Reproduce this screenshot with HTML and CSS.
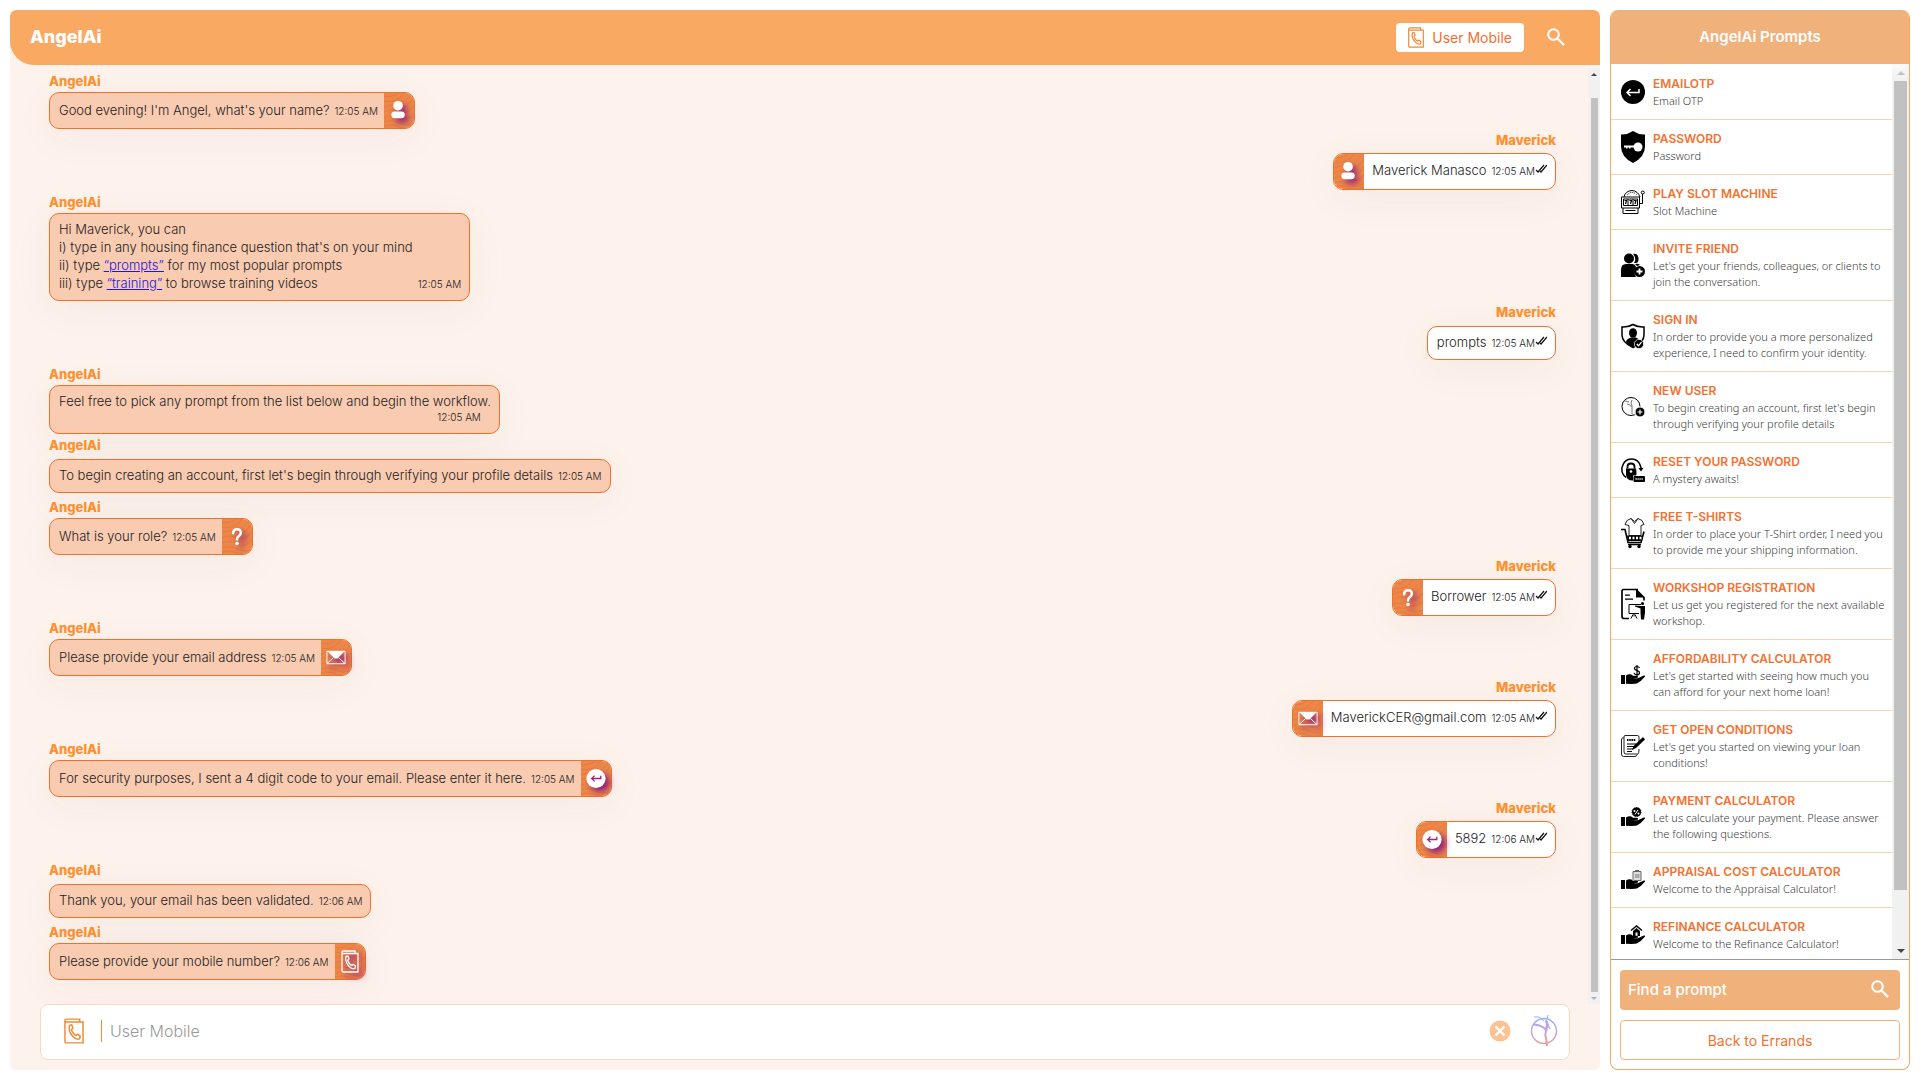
FILE: index.html
```html
<!DOCTYPE html>
<html lang="en">
<head>
<meta charset="utf-8">
<meta name="viewport" content="width=device-width, initial-scale=1">
<title>AngelAi</title>
<link rel="stylesheet" href="styles.css">
</head>
<body>
<svg class="defs" aria-hidden="true">
  <defs>
    <linearGradient id="dance" gradientUnits="userSpaceOnUse" x1="0" y1="2" x2="0" y2="32">
      <stop offset="0" stop-color="#6d9bea"/><stop offset=".45" stop-color="#b78bec"/><stop offset="1" stop-color="#e58a6c"/>
    </linearGradient>
    <symbol id="grain" viewBox="0 0 30 35">
      <g fill="none" stroke="#df712f" stroke-width="1" opacity=".5">
        <path d="M0 3q8 2 14-3M0 8q12 3 20-8M0 14q9-4 16-1t14-9M0 19q8-4 15 0t15-6M0 24q9-3 16 1t14-4M0 29q8-3 15 1t15 0M0 33q9-2 15 1t15-1M22 7q3-4 8-6"/>
      </g>
    </symbol>
    <symbol id="person" viewBox="0 0 20 24"><circle cx="9" cy="7" r="5"/><rect x="2" y="13" width="14" height="7" rx="3.500"/></symbol>
    <symbol id="question" viewBox="0 0 20 24"><path d="M6 8.500Q6 4.500 10 4.500T14 8.300Q14 10 11.700 11.800Q10 13 10 15" fill="none" stroke="currentColor" stroke-width="2.600" stroke-linecap="round"/><circle cx="10" cy="19.300" r="1.900"/></symbol>
    <symbol id="mail" viewBox="0 0 20 24"><path d="M.5 5.500h19v13H.5z" fill="none" stroke="currentColor"/><path d="M1 5.500h18L11.500 13h-3z"/><path d="M.5 18.500l7-6.500M19.500 18.500l-7-6.500" stroke="currentColor"/></symbol>
    <symbol id="enter" viewBox="0 0 20 24"><circle cx="10" cy="12" r="10"/><path d="M15 9v3H6M8.500 9L5.500 12l3 3" fill="none" stroke="#a02572" stroke-width="1.400"/></symbol>
    <symbol id="phone" viewBox="0 0 18 23"><g fill="none" stroke="currentColor" stroke-width="1.300"><path d="M1 3.500h16v18.500H2.500Q1 22 1 20.500V2.500Q1 1 2.500 1H14v2.500"/><path d="M5 6.500l2-.5 1 3-1.300 1.200q1.200 4 4.200 5.300l1.300-1.200 2.300 1.800-.6 2.400q-3 1.200-6.200-2.500-4-4.500-2.700-9.500z" stroke-linejoin="round"/></g></symbol>
    <symbol id="search" viewBox="0 0 18 18"><circle cx="6.500" cy="6.500" r="5.300" fill="none" stroke="currentColor" stroke-width="2"/><path d="M10.500 10.500L17 17" stroke="currentColor" stroke-width="2.400"/></symbol>
    <symbol id="ticks" viewBox="0 0 12 10"><path d="M1 6l2 2 6-7M5 7l1 1 6-7" fill="none" stroke="currentColor" stroke-width="1.200"/></symbol>
    <symbol id="close" viewBox="0 0 22 22"><circle cx="11" cy="11" r="10.500" fill="#fdc291"/><path d="M6.500 6.500l9 9M15.500 6.500l-9 9" stroke="#fff" stroke-width="2.400"/></symbol>
    <symbol id="dancer" viewBox="0 0 28 34"><g fill="none" stroke="url(#dance)" opacity=".8"><circle cx="14" cy="17" r="12.500" stroke-width="1.500"/><path d="M4 3l5 0 5 4M18 1l-1 4M16 10l4 5-2-5" stroke-width="1"/><path d="M15.500 6.500q3 3 1 7l-.5 4" stroke-width="2.400"/><path d="M16 16Q12 11 3.500 10.500M16 17q-1.500 4 .2 8l.8 7" stroke-width="2"/></g></symbol>
    <symbol id="hand" viewBox="0 0 24 12"><path d="M0 2h4v9H0z"/><path d="M5 2.500q4-2.500 7 .2h4q1.500.5.800 2l-5 .6h5l6-2.800q1.800-.2 1 1.200-4 5-8 6.800-2 .7-10.800.3z"/></symbol>
    <symbol id="p-enter" viewBox="0 0 24 24"><circle cx="12" cy="12" r="12"/><path d="M18 9v3.500H7M9.500 9L6 12.500l3.500 3.500" fill="none" stroke="#fff" stroke-width="1.500"/></symbol>
    <symbol id="p-password" viewBox="0 0 24 32"><path d="M12 0q6 4 12 3.500v12Q24 26 12 32 0 26 0 15.500v-12Q6 4 12 0z"/><circle cx="17" cy="16" r="4.500" fill="#fff"/><path d="M14 14.500H3v2h2v1h1.500v-1H8v1h1.500v-1H14z" fill="#fff"/></symbol>
    <symbol id="p-slot" viewBox="0 0 24 24"><g fill="none" stroke="#000"><path d="M3 7q1-6 8-6.500Q17 1 19 7"/><path d="M6 5q2-2.500 5-2.500t5 2.500" stroke-dasharray="1 1"/><path d="M.5 7h18v11H.5zM2.500 9h14v6.500h-14zM7 9v6.500M12 9v6.500M2 18v5.500h15V18M4.500 20.500h10M18.500 13.500h3V4"/><path d="M3.500 10.500h2l-1 3.500M8.500 10.500h2l-1 3.500M13 10.500h2l-1 3.500" stroke-width="1.200"/><circle cx="21.800" cy="2.500" r="1.500"/></g></symbol>
    <symbol id="p-invite" viewBox="0 0 24 24"><circle cx="8" cy="5.500" r="5"/><path d="M12 .8q5-1 5.500 4.500T13 10q3-4-1-9.200zM0 24V17q0-6 5-6h6q3 0 4 3-3 5 0 10zM14 11q3-1 5 1l-3 1z"/><circle cx="18.500" cy="18.500" r="5.500"/><path d="M18.500 15.500v6M15.500 18.500h6" stroke="#fff" stroke-width="1.800"/></symbol>
    <symbol id="p-signin" viewBox="0 0 24 25"><path d="M12 1q5 3 11 2.500v8Q23 19 12 24 1 19 1 11.500v-8Q7 4 12 1z" fill="none" stroke="#000" stroke-width="1.500"/><ellipse cx="12" cy="9.500" rx="4" ry="4.800"/><path d="M5 18q1-3 5-4h5q3 1 4 4l-7 6q-5-2-7-6z"/><circle cx="18" cy="20.500" r="4.600" stroke="#fff" stroke-width=".7"/><path d="M15.800 20.500l1.700 1.800 3-3.600" fill="none" stroke="#fff" stroke-width="1.300"/></symbol>
    <symbol id="p-new" viewBox="0 0 24 20"><circle cx="10" cy="9.500" r="9" fill="none" stroke="#000"/><path d="M4 4l4 1M6 7q3 0 4.500 3M11 3q-2 3 0 6v8" fill="none" stroke="#777"/><circle cx="19" cy="15" r="5" stroke="#fff"/><path d="M19 12.500v5M16.500 15h5" stroke="#fff" stroke-width="1.200"/></symbol>
    <symbol id="p-reset" viewBox="0 0 24 25"><path d="M5 20Q0 16 1 10 3 1.500 10.500 1.500T20 10v2" fill="none" stroke="#000" stroke-width="1.500"/><path d="M17.500 10.500h5L20 14zM5 11h10q1 6 0 7h-3v5Q5 23 5 17z"/><path d="M6.500 11V9q0-3 3.500-3t3.500 3v2" fill="none" stroke="#000" stroke-width="1.800"/><circle cx="10" cy="14" r="1.300" fill="#fff"/><rect x="12.500" y="18.500" width="11.500" height="6" rx="1"/><path d="M14.500 21.500h8" stroke="#fff" stroke-width="1.400" stroke-dasharray="1.200 .8"/></symbol>
    <symbol id="p-shirt" viewBox="0 0 24 31"><path d="M10 1L6 3 4 7l4 1v10h12V8l3-1-2-4-4-2-3.500 3zM10 1l3.500 5 3.500-5" fill="none" stroke="#222"/><path d="M0 12h4l3 13h13l3-11" fill="none" stroke="#000" stroke-width="1.600"/><path d="M6 18h16l-1 5.500H7z"/><path d="M8 20.500h13" stroke="#fff" stroke-width="2.500" stroke-dasharray="2 1.500"/><path d="M7 27h13" stroke="#000" stroke-width="1.500"/><circle cx="9" cy="29" r="1.700"/><circle cx="18" cy="29" r="1.700"/></symbol>
    <symbol id="p-workshop" viewBox="0 0 24 31"><path d="M17 1H2.500Q1 1 1 2.500v25Q1 30 3 30h5M15 1l8 8v3" fill="none" stroke="#000" stroke-width="1.700"/><path d="M15 1v8h8zM4 6h5v1.300H4zM4 10h8v1.300H4z"/><path d="M20 16H8v9h10M13 25v3M12 26l-2 4M14 26l2 4" fill="none" stroke="#000"/><circle cx="21.500" cy="15" r="1.600"/><path d="M14 17l6 .5h4V24l-1 7h-3l-.5-7v-4l-5.500-2z"/></symbol>
    <symbol id="p-afford" viewBox="0 0 24 20"><use href="#hand" y="8" width="24" height="12"/><path d="M18.500 3Q18 1.500 16 1.500q-2.500 0-2.500 2 0 1.500 2.500 2t2.500 2.300q0 2-2.500 2T13 7.800M16 0v11" fill="none" stroke="#000" stroke-width="1.200"/></symbol>
    <symbol id="p-loan" viewBox="0 0 24 22"><path d="M18 7V2q0-1.500-1.500-1.500H4Q3 .5 3 2v15q0 2 2 2h12q1-.5 1-5M3 3H1.500Q.5 3 .5 5v14q0 2.500 2 2.500H14q1.500 0 2-2" fill="none" stroke="#222"/><path d="M6 5h9" stroke="#000" stroke-width="2" stroke-dasharray="1.500 .7"/><path d="M6 9h9M6 11.500h7M6 14h6M6 16.500h5" stroke="#000"/><path d="M22 2l2 2.500L15 13l-4 2 1.500-4z"/></symbol>
    <symbol id="p-pay" viewBox="0 0 24 20"><use href="#hand" y="8" width="24" height="12"/><circle cx="15.500" cy="5" r="4.500" stroke="#000" stroke-dasharray="1.500 1"/><path d="M17 3l-3 4.500" stroke="#fff"/><circle cx="13.500" cy="4" r="1" fill="#fff"/><circle cx="17.500" cy="6.500" r="1" fill="#fff"/></symbol>
    <symbol id="p-appraisal" viewBox="0 0 24 20"><use href="#hand" y="8" width="24" height="12"/><path d="M12 1.500h8v9h-7l-1-1z" fill="#ddd" stroke="#666"/><path d="M14 0h4v2h-4z" fill="#666"/><path d="M14 5h4.500M14 7h4.500" stroke="#777"/></symbol>
    <symbol id="p-refi" viewBox="0 0 24 20"><use href="#hand" y="8" width="24" height="12"/><path d="M10 5.500L15.500 1 21 5.500" fill="none" stroke="#000" stroke-width="1.500"/><path d="M12 6l3.500-3L19 6v5h-2.500V7.500h-2V11H12z"/></symbol>
  </defs>
</svg>

<main class="chat">
  <header class="chat-head">
    <h1 class="brand">AngelAi</h1>
    <button class="topic" type="button"><svg class="topic-icon"><use href="#phone"/></svg>User Mobile</button>
    <button class="icon-btn" type="button" aria-label="Search conversation"><svg class="ico-search"><use href="#search"/></svg></button>
  </header>

  <div class="chat-body">
    <div class="log">
      <article class="msg"><h2 class="who">AngelAi</h2>
        <div class="bubble"><div class="said"><p class="text">Good evening! I'm Angel, what's your name?</p><time class="time">12:05 AM</time></div><span class="tile"><svg class="grain"><use href="#grain"/></svg><svg class="glyph"><use href="#person"/></svg></span></div></article>
      <article class="msg mine"><h2 class="who">Maverick</h2>
        <div class="bubble"><span class="tile"><svg class="grain"><use href="#grain"/></svg><svg class="glyph"><use href="#person"/></svg></span><div class="said"><p class="text">Maverick Manasco</p><time class="time">12:05 AM</time><svg class="ticks"><use href="#ticks"/></svg></div></div></article>
      <article class="msg"><h2 class="who">AngelAi</h2>
        <div class="bubble"><div class="said"><p class="text">Hi Maverick, you can<br>i) type in any housing finance question that's on your mind<br>ii) type <a class="link" href="#">“prompts”</a> for my most popular prompts<br>iii) type <a class="link" href="#">“training”</a> to browse training videos</p><time class="time">12:05 AM</time></div></div></article>
      <article class="msg mine plain"><h2 class="who">Maverick</h2>
        <div class="bubble"><div class="said"><p class="text">prompts</p><time class="time">12:05 AM</time><svg class="ticks"><use href="#ticks"/></svg></div></div></article>
      <article class="msg"><h2 class="who">AngelAi</h2>
        <div class="bubble"><div class="said stacked"><p class="text">Feel free to pick any prompt from the list below and begin the workflow.</p><time class="time">12:05 AM</time></div></div></article>
      <article class="msg plain"><h2 class="who">AngelAi</h2>
        <div class="bubble"><div class="said"><p class="text">To begin creating an account, first let's begin through verifying your profile details</p><time class="time">12:05 AM</time></div></div></article>
      <article class="msg"><h2 class="who">AngelAi</h2>
        <div class="bubble"><div class="said"><p class="text">What is your role?</p><time class="time">12:05 AM</time></div><span class="tile"><svg class="grain"><use href="#grain"/></svg><svg class="glyph"><use href="#question"/></svg></span></div></article>
      <article class="msg mine"><h2 class="who">Maverick</h2>
        <div class="bubble"><span class="tile"><svg class="grain"><use href="#grain"/></svg><svg class="glyph"><use href="#question"/></svg></span><div class="said"><p class="text">Borrower</p><time class="time">12:05 AM</time><svg class="ticks"><use href="#ticks"/></svg></div></div></article>
      <article class="msg"><h2 class="who">AngelAi</h2>
        <div class="bubble"><div class="said"><p class="text">Please provide your email address</p><time class="time">12:05 AM</time></div><span class="tile"><svg class="grain"><use href="#grain"/></svg><svg class="glyph"><use href="#mail"/></svg></span></div></article>
      <article class="msg mine"><h2 class="who">Maverick</h2>
        <div class="bubble"><span class="tile"><svg class="grain"><use href="#grain"/></svg><svg class="glyph"><use href="#mail"/></svg></span><div class="said"><p class="text">MaverickCER@gmail.com</p><time class="time">12:05 AM</time><svg class="ticks"><use href="#ticks"/></svg></div></div></article>
      <article class="msg"><h2 class="who">AngelAi</h2>
        <div class="bubble"><div class="said"><p class="text">For security purposes, I sent a 4 digit code to your email. Please enter it here.</p><time class="time">12:05 AM</time></div><span class="tile"><svg class="grain"><use href="#grain"/></svg><svg class="glyph"><use href="#enter"/></svg></span></div></article>
      <article class="msg mine"><h2 class="who">Maverick</h2>
        <div class="bubble"><span class="tile"><svg class="grain"><use href="#grain"/></svg><svg class="glyph"><use href="#enter"/></svg></span><div class="said"><p class="text">5892</p><time class="time">12:06 AM</time><svg class="ticks"><use href="#ticks"/></svg></div></div></article>
      <article class="msg plain"><h2 class="who">AngelAi</h2>
        <div class="bubble"><div class="said"><p class="text">Thank you, your email has been validated.</p><time class="time">12:06 AM</time></div></div></article>
      <article class="msg"><h2 class="who">AngelAi</h2>
        <div class="bubble"><div class="said"><p class="text">Please provide your mobile number?</p><time class="time">12:06 AM</time></div><span class="tile"><svg class="grain"><use href="#grain"/></svg><svg class="glyph"><use href="#phone"/></svg></span></div></article>
    </div>
    <div class="bar bar-chat" aria-hidden="true"><span class="arrow up"></span><span class="thumb"></span><span class="arrow down faint"></span></div>
  </div>

  <form class="composer">
    <svg class="composer-icon"><use href="#phone"/></svg>
    <input class="composer-input" type="text" aria-label="User Mobile" placeholder="User Mobile">
    <button class="icon-btn" type="button" aria-label="Clear"><svg class="ico-close"><use href="#close"/></svg></button>
    <button class="icon-btn" type="submit" aria-label="Send"><svg class="ico-dancer"><use href="#dancer"/></svg></button>
  </form>
</main>

<aside class="side">
  <h2 class="side-head">AngelAi Prompts</h2>
  <div class="side-body">
    <ul class="prompts">
      <li class="prompt"><svg class="p-icon"><use href="#p-enter"/></svg><div><h3 class="p-title">EMAILOTP</h3><p class="p-text">Email OTP</p></div></li>
      <li class="prompt"><svg class="p-icon"><use href="#p-password"/></svg><div><h3 class="p-title">PASSWORD</h3><p class="p-text">Password</p></div></li>
      <li class="prompt"><svg class="p-icon"><use href="#p-slot"/></svg><div><h3 class="p-title">PLAY SLOT MACHINE</h3><p class="p-text">Slot Machine</p></div></li>
      <li class="prompt"><svg class="p-icon"><use href="#p-invite"/></svg><div><h3 class="p-title">INVITE FRIEND</h3><p class="p-text">Let's get your friends, colleagues, or clients to join the conversation.</p></div></li>
      <li class="prompt"><svg class="p-icon"><use href="#p-signin"/></svg><div><h3 class="p-title">SIGN IN</h3><p class="p-text">In order to provide you a more personalized experience, I need to confirm your identity.</p></div></li>
      <li class="prompt"><svg class="p-icon"><use href="#p-new"/></svg><div><h3 class="p-title">NEW USER</h3><p class="p-text">To begin creating an account, first let's begin through verifying your profile details</p></div></li>
      <li class="prompt"><svg class="p-icon"><use href="#p-reset"/></svg><div><h3 class="p-title">RESET YOUR PASSWORD</h3><p class="p-text">A mystery awaits!</p></div></li>
      <li class="prompt"><svg class="p-icon"><use href="#p-shirt"/></svg><div><h3 class="p-title">FREE T-SHIRTS</h3><p class="p-text">In order to place your T-Shirt order, I need you to provide me your shipping information.</p></div></li>
      <li class="prompt"><svg class="p-icon"><use href="#p-workshop"/></svg><div><h3 class="p-title">WORKSHOP REGISTRATION</h3><p class="p-text">Let us get you registered for the next available workshop.</p></div></li>
      <li class="prompt"><svg class="p-icon"><use href="#p-afford"/></svg><div><h3 class="p-title">AFFORDABILITY CALCULATOR</h3><p class="p-text">Let's get started with seeing how much you can afford for your next home loan!</p></div></li>
      <li class="prompt"><svg class="p-icon"><use href="#p-loan"/></svg><div><h3 class="p-title">GET OPEN CONDITIONS</h3><p class="p-text">Let's get you started on viewing your loan conditions!</p></div></li>
      <li class="prompt"><svg class="p-icon"><use href="#p-pay"/></svg><div><h3 class="p-title">PAYMENT CALCULATOR</h3><p class="p-text">Let us calculate your payment. Please answer the following questions.</p></div></li>
      <li class="prompt"><svg class="p-icon"><use href="#p-appraisal"/></svg><div><h3 class="p-title">APPRAISAL COST CALCULATOR</h3><p class="p-text">Welcome to the Appraisal Calculator!</p></div></li>
      <li class="prompt"><svg class="p-icon"><use href="#p-refi"/></svg><div><h3 class="p-title">REFINANCE CALCULATOR</h3><p class="p-text">Welcome to the Refinance Calculator!</p></div></li>
    </ul>
    <div class="bar bar-side" aria-hidden="true"><span class="arrow up faint"></span><span class="thumb"></span><span class="arrow down"></span></div>
  </div>
  <div class="side-foot">
    <label class="find"><input class="find-input" type="text" aria-label="Find a prompt" placeholder="Find a prompt"><svg class="ico-search"><use href="#search"/></svg></label>
    <button class="back" type="button">Back to Errands</button>
  </div>
</aside>
</body>
</html>
```
FILE: styles.css
```css
* { box-sizing: border-box; }
h1, h2, h3, p, ul { margin: 0; padding: 0; }
button, input { font: inherit; border: 0; background: none; padding: 0; }
button { cursor: pointer; }
svg { display: block; flex: none; fill: currentColor; }

body {
  margin: 0;
  padding: 10px;
  height: 100vh;
  display: grid;
  grid-template-columns: minmax(0, 1fr) 300px;
  grid-template-rows: minmax(0, 1fr);
  gap: 10px;
  background: #fff;
  color: #222;
  font-family: Inter, "Noto Sans", sans-serif;
  font-size: 13px;
  font-weight: 300;
}
.defs { position: absolute; width: 0; height: 0; }

/* Chat column */
.chat {
  display: flex;
  flex-direction: column;
  background: #fef2ec;
  border-radius: 6px;
  overflow: hidden;
}
.chat-head {
  display: flex;
  align-items: center;
  min-height: 55px;
  padding: 0 35px 2px 20px;
  background: #faa962;
  border-radius: 6px 6px 0 24px;
  color: #fff;
}
.brand { flex: 1; font-size: 18px; line-height: 24px; font-weight: 800; }
.topic {
  display: flex;
  align-items: center;
  gap: 7px;
  height: 29px;
  padding: 0 12px 0 11px;
  margin: 2px 23px 0 0;
  border-radius: 4px;
  background: #fff;
  color: #f26f32;
  font-size: 14px;
  font-weight: 400;
}
.topic-icon { width: 18px; height: 21px; color: #ed8a35; }
.icon-btn { color: inherit; }
.ico-search { width: 18px; height: 18px; color: #fff; }

.chat-body { flex: 1; min-height: 0; display: flex; }
.log { flex: 1; min-width: 0; padding: 6px 32px 0 39px; overflow: hidden; }
.msg { display: flex; flex-direction: column; align-items: flex-start; margin-bottom: 1px; }
.who { margin-bottom: 1px; font-size: 13px; line-height: 20px; font-weight: 800; color: #ff9130; }
.bubble {
  display: flex;
  border: 1px solid #f2702c;
  border-radius: 10px;
  background: #f9cbb1;
  box-shadow: 0 8px 40px rgba(60, 60, 60, .05);
}
.said { display: flex; align-items: flex-end; gap: 5px; padding: 6px 8px 8px 9px; line-height: 18px; }
.said:not(:only-child) { padding: 6px 6px 9px 9px; }
.stacked { flex-direction: column; gap: 0; }
.stacked .time { line-height: 15px; margin-right: 10px; }
.time { font-size: 10px; line-height: 16px; white-space: nowrap; }
.link { color: #1a14e8; text-decoration: underline; }
.ticks { width: 12px; height: 10px; margin: 0 0 5px -5px; color: #111; }
.tile {
  position: relative;
  display: flex;
  align-items: center;
  justify-content: center;
  width: 30px;
  height: 35px;
  background: #ec8749;
  border-radius: 0 9px 9px 0;
  color: #fff;
}
.grain { position: absolute; inset: 0; width: 100%; height: 100%; border-radius: inherit; }
.glyph { position: relative; width: 20px; height: 23px; filter: drop-shadow(4px 4px 3px #8f1b7c); }
.mine { align-items: flex-end; margin-bottom: 2px; }
.mine .who { margin-bottom: 3px; }
.mine .bubble { background: #fff; }
.mine .said:not(:only-child) { padding: 6px 8px 10px 8px; }
.mine .tile { border-radius: 9px 0 0 9px; }
.plain, .mine.plain { margin-bottom: 4px; }
.plain .who, .mine.plain .who { margin-bottom: 4px; }

.composer {
  display: flex;
  align-items: center;
  margin: 0 30px 10px;
  padding: 0 10px 2px 22px;
  min-height: 56px;
  background: #fff;
  border: 1px solid #fad8bb;
  border-radius: 8px;
}
.composer-icon { width: 22px; height: 26px; margin-right: 16px; color: #ec8a35; }
.composer-input {
  flex: 1;
  min-width: 0;
  height: 22px;
  padding-left: 8px;
  border-left: 1px solid #ec8a35;
  font-size: 16px;
  font-weight: 300;
}
.composer-input::placeholder { color: #999; opacity: 1; }
.ico-close { width: 22px; height: 22px; margin-right: 18px; }
.ico-dancer { width: 30px; height: 34px; }

/* Scroll tracks */
.bar { display: flex; flex-direction: column; align-items: center; background: #f1f1f1; }
.bar-chat { width: 12px; margin-top: 3px; }
.bar-side { width: 17px; }
.thumb { flex: 1; background: #c1c1c1; }
.bar-chat .thumb { width: 7px; margin-top: 18px; }
.bar-side .thumb { width: 13px; margin-bottom: 52px; }
.arrow { display: flex; align-items: center; justify-content: center; width: 100%; height: 12px; color: #444; }
.bar-side .arrow { height: 17px; }
.arrow::before { content: ""; border: 3px solid transparent; }
.bar-side .arrow::before { border-width: 4px; }
.arrow.up::before { border-top: 0; border-bottom-color: currentColor; }
.arrow.down::before { border-bottom: 0; border-top-color: currentColor; }
.faint { color: #b0b0b0; }

/* Prompt list */
.side { display: flex; flex-direction: column; border: 1px solid #f5a962; border-top: 0; border-radius: 8px; overflow: hidden; }
.side-head {
  position: relative;
  margin: 0 -1px;
  padding: 15px 0;
  background: #f0b27a;
  box-shadow: 0 6px 12px rgba(255, 255, 255, .9);
  color: #fff;
  font-size: 15px;
  line-height: 24px;
  font-weight: 600;
  text-align: center;
}
.side-body { flex: 1; min-height: 0; display: flex; border-bottom: 1px solid #999; }
.prompts { flex: 1; min-width: 0; padding-top: 1px; overflow: hidden; list-style: none; }
.prompt { display: flex; align-items: center; gap: 8px; padding: 10px 6px 10px 10px; border-bottom: 1px solid #fad2b0; }
.p-icon { width: 24px; height: 32px; color: #000; }
.p-title { font-size: 12px; line-height: 18px; font-weight: 600; color: #f4712f; }
.p-text { font-family: "Noto Sans", sans-serif; font-size: 11px; line-height: 16px; color: #3c3c3c; }
.side-foot { display: flex; flex-direction: column; gap: 10px; padding: 10px 9px 9px; }
.find { display: flex; align-items: center; height: 40px; padding: 0 11px 2px 8px; border-radius: 4px; background: #f0b27a; }
.find-input { flex: 1; min-width: 0; color: #fff; font-size: 15px; font-weight: 500; }
.find-input::placeholder { color: #fff; opacity: 1; }
.back { height: 40px; border: 1px solid #f0b27a; border-radius: 4px; color: #f4712f; font-size: 14px; font-weight: 400; }
```
